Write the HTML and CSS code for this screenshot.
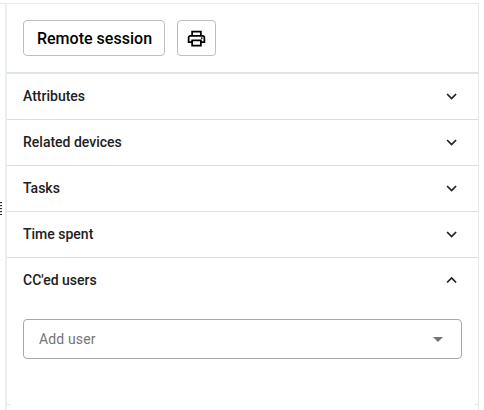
FILE: index.html
```html
<!DOCTYPE html>
<html lang="en">
<head>
<meta charset="utf-8">
<title>Ticket details</title>
<link rel="stylesheet" href="styles.css">
</head>
<body>
<div class="page">
  <div class="gutter"><span class="handle"></span></div>
  <main class="panel">
    <header class="toolbar">
      <button class="btn session">Remote session</button>
      <button class="btn print" aria-label="Print">
        <svg width="21" height="21" viewBox="0 0 24 24"><path fill="currentColor" d="M19 8h-1V3H6v5H5c-1.660 0-3 1.340-3 3v6h4v4h12v-4h4v-6c0-1.660-1.340-3-3-3zM8 5h8v3H8V5zm8 12v2H8v-4h8v2zm2-2v-2H6v2H4v-4c0-.55.45-1 1-1h14c.55 0 1 .45 1 1v4h-2z"/><circle cx="18" cy="11.500" r="1" fill="currentColor"/></svg>
      </button>
    </header>
    <section class="row"><span>Attributes</span><svg class="chevron" viewBox="0 0 20 20"><path d="M5.100 8l4.500 4.500L14.100 8"/></svg></section>
    <section class="row"><span>Related devices</span><svg class="chevron" viewBox="0 0 20 20"><path d="M5.100 8l4.500 4.500L14.100 8"/></svg></section>
    <section class="row"><span>Tasks</span><svg class="chevron" viewBox="0 0 20 20"><path d="M5.100 8l4.500 4.500L14.100 8"/></svg></section>
    <section class="row"><span>Time spent</span><svg class="chevron" viewBox="0 0 20 20"><path d="M5.100 8l4.500 4.500L14.100 8"/></svg></section>
    <section class="row open"><span>CC'ed users</span><svg class="chevron" viewBox="0 0 20 20"><path d="M5.100 12.500L9.600 8l4.500 4.500"/></svg></section>
    <div class="select"><span>Add user</span><svg width="10" height="5" viewBox="0 0 10 5"><path fill="#757575" d="M0 0h10L5 5z"/></svg></div>
    <div class="ends"><i></i><i></i></div>
  </main>
</div>
</body>
</html>
```
FILE: styles.css
```css
* { box-sizing: border-box; }
body { margin: 0; background: #fff; font-family: Roboto, sans-serif; color: #212121; }
.page { display: flex; width: 484px; height: 410px; padding-top: 3px; overflow: hidden; }
.gutter { width: 5px; padding-top: 198px; border-top: 1px solid #e9e9e9; }
.handle { display: block; width: 2px; height: 13px; background: repeating-linear-gradient(#333 0 1px, #ddd 1px 2px, #fff 2px 3px); }
.panel { width: 474px; display: flex; flex-direction: column; border-left: 2px solid #e9eeee; border-right: 1px solid #e9e9e9; }
.toolbar { display: flex; gap: 12px; height: 71px; padding: 16px 16px 0; border-top: 1px solid #e9e9e9; border-bottom: 2px solid #e1e4e4; }
.btn { display: flex; align-items: center; justify-content: center; height: 36px; padding: 0; background: #fff; border: 1px solid #bdbdbd; border-radius: 4px; color: #000; font: 500 16px Roboto, sans-serif; }
.session { width: 142px; padding-left: 1px; letter-spacing: .02px; }
.print { width: 39px; padding-right: 1px; }
.row { display: flex; align-items: center; justify-content: space-between; height: 46px; padding: 0 16px 2px; border-bottom: 1px solid #dcdfdf; font-size: 14px; font-weight: 500; }
.row.open { border-color: transparent; }
.chevron { width: 20px; height: 20px; fill: none; stroke: currentColor; stroke-width: 1.7; }
.select { display: flex; align-items: center; justify-content: space-between; height: 40px; margin: 15px 16px 45px; padding: 0 18px 0 15px; border: 1px solid #a8a8a8; border-radius: 4px; color: #757575; font-size: 14px; letter-spacing: .15px; }
.ends { display: flex; justify-content: space-between; }
.ends i { width: 3px; height: 1px; background: #e4e7e7; }
```
